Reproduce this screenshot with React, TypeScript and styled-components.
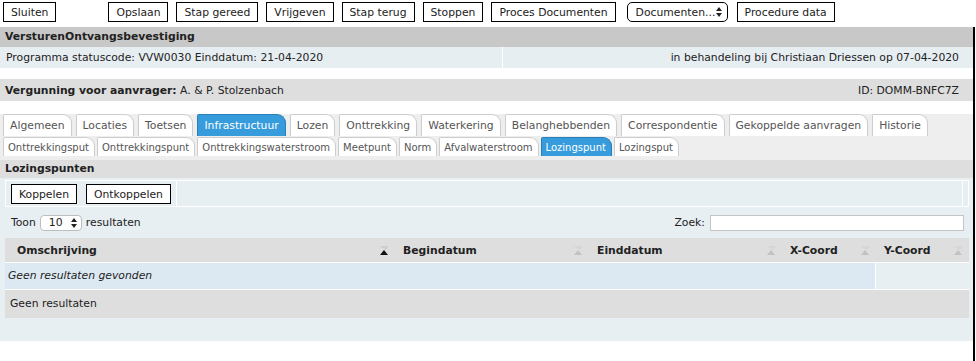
import React from "react";
import styled, { createGlobalStyle } from "styled-components";

const GlobalStyle = createGlobalStyle`
  html, body {
    margin: 0;
    padding: 0;
    background: #fff;
  }
  body {
    font-family: "DejaVu Sans", Verdana, sans-serif;
    font-size: 10.8px;
    color: #222;
  }
`;

const Page = styled.div`
  width: 976px;
  height: 361px;
  display: flex;
  flex-direction: column;
  overflow: hidden;
`;

const Toolbar = styled.div`
  display: flex;
  align-items: flex-start;
  gap: 8px;
  height: 27px;
  padding: 2px 0 0 3px;
  box-sizing: border-box;
  flex-shrink: 0;
`;

const Button = styled.button<{ $spaced?: boolean }>`
  height: 20px;
  padding: 0 7px;
  border: 1px solid #000;
  border-radius: 0;
  background: #fff;
  font: inherit;
  color: #222;
  white-space: nowrap;
  margin-right: ${(p) => (p.$spaced ? "44px" : "0")};
`;

const Select = styled.div<{ $muted?: boolean }>`
  display: inline-flex;
  align-items: center;
  justify-content: space-between;
  box-sizing: border-box;
  height: ${(p) => (p.$muted ? "16px" : "20px")};
  padding: ${(p) => (p.$muted ? "0 4px 0 8px" : "0 5px 0 8px")};
  margin: ${(p) => (p.$muted ? "0 4px" : "0 1px 0 3px")};
  width: ${(p) => (p.$muted ? "42px" : "101px")};
  border: 1px solid ${(p) => (p.$muted ? "#bdbdbd" : "#000")};
  border-radius: ${(p) => (p.$muted ? "4px" : "5px")};
  background: #fff;
`;

const Main = styled.div`
  flex: 1;
  width: 973px;
  border-right: 2px solid #000;
  display: flex;
  flex-direction: column;
`;

const TitleBar = styled.div`
  height: 20px;
  line-height: 20px;
  background: #c8c8c8;
  font-weight: bold;
  padding-left: 5px;
`;

const InfoRow = styled.div`
  display: flex;
  height: 21px;
  background: #e7eef2;
  line-height: 21px;
`;

const InfoCell = styled.div<{ $right?: boolean }>`
  box-sizing: border-box;
  ${(p) =>
    p.$right
      ? `flex: 1; text-align: right; padding-right: 14px;`
      : `width: 503px; padding-left: 6px; border-right: 1px solid #fff;`}
`;

const ApplicantBar = styled.div`
  margin-top: 11px;
  height: 22px;
  background: #dedede;
  display: flex;
  align-items: center;
  justify-content: space-between;
  padding: 0 14px 0 5px;
`;

const TabsArea = styled.div`
  margin-top: 13px;
  background: #eeeeee;
  padding: 0 0 4px 3px;
  display: flex;
  flex-direction: column;
  gap: 1px;
`;

const TabRow = styled.div<{ $small?: boolean }>`
  display: flex;
  align-items: flex-end;
  gap: ${(p) => (p.$small ? "2px" : "4px")};
`;

const Tab = styled.div<{ $active?: boolean; $small?: boolean }>`
  box-sizing: border-box;
  height: ${(p) => (p.$small ? "19px" : "22px")};
  line-height: ${(p) => (p.$small ? "19px" : "22px")};
  padding: ${(p) => (p.$small ? "0 5px 0 4px" : "0 6px 0 6px")};
  font-size: ${(p) => (p.$small ? "10px" : "10.8px")};
  border: 1px solid ${(p) => (p.$active ? "#2c7fb6" : "#cdcdcd")};
  border-bottom: none;
  border-radius: 2px 9px 0 0;
  background: ${(p) => (p.$active ? "#379cdc" : "#fff")};
  color: ${(p) => (p.$active ? "#fff" : "#555")};
  white-space: nowrap;
`;

const SectionBar = styled.div`
  height: 18px;
  line-height: 18px;
  background: #dedede;
  font-weight: bold;
  padding-left: 5px;
`;

const Panel = styled.div`
  height: 163px;
  background: #e8eff2;
  padding: 2px 4px 0 5px;
  box-sizing: border-box;
  display: flex;
  flex-direction: column;
`;

const ActionBar = styled.div`
  display: flex;
  height: 27px;
  border: 1px solid #fff;
  box-sizing: border-box;
`;

const ActionCell = styled.div<{ $kind: "buttons" | "fill" | "end" }>`
  display: flex;
  gap: 9px;
  ${(p) =>
    p.$kind === "buttons"
      ? `width: 171px; padding: 3px 0 0 5px; border-right: 1px solid #fff; box-sizing: border-box;`
      : p.$kind === "fill"
      ? `flex: 1;`
      : `width: 5px; border-left: 1px solid #fff;`}
`;

const LengthRow = styled.div`
  height: 31px;
  display: flex;
  align-items: center;
  justify-content: space-between;
  padding: 0 5px 0 6px;
`;

const Inline = styled.div`
  display: flex;
  align-items: center;
`;

const SearchInput = styled.input`
  width: 254px;
  height: 16px;
  box-sizing: border-box;
  border: 1px solid #c4c4c4;
  margin: 0 0 0 5px;
  padding: 0 3px;
  font: inherit;
  background: #fff;
`;

const Table = styled.div`
  display: grid;
  grid-template-columns: 390px 194px 193px 94px 1fr;
`;

const HeadCell = styled.div<{ $first?: boolean }>`
  height: 24px;
  background: #dedede;
  border-bottom: 1px solid #fff;
  display: flex;
  align-items: center;
  justify-content: space-between;
  padding: 0 5px 0 ${(p) => (p.$first ? "12px" : "8px")};
  font-weight: bold;
`;

const EmptyRow = styled.div`
  grid-column: 1 / 5;
  height: 26px;
  line-height: 26px;
  background: #dde9f2;
  border-right: 1px solid #fff;
  padding-left: 3px;
  font-style: italic;
`;

const Footer = styled.div`
  grid-column: 1 / -1;
  height: 28px;
  line-height: 28px;
  background: #dedede;
  border-top: 1px solid #fff;
  padding-left: 5px;
`;

const SortIcon = ({ active }: { active?: boolean }) => (
  <svg width="12" height="9" viewBox="0 0 12 9">
    <polygon points="1,0 11,0 8,4" fill={active ? "#cfcfcf" : "#d6d6d6"} />
    <polygon points="2,9 10,9 6,4" fill={active ? "#111" : "#c2c2c2"} />
  </svg>
);

const UpDown = () => (
  <svg width="6" height="10" viewBox="0 0 6 10">
    <polygon points="0,4 6,4 3,0" fill="#222" />
    <polygon points="0,6 6,6 3,10" fill="#222" />
  </svg>
);

const topButtons = [
  "Opslaan",
  "Stap gereed",
  "Vrijgeven",
  "Stap terug",
  "Stoppen",
  "Proces Documenten",
];

const mainTabs = [
  "Algemeen",
  "Locaties",
  "Toetsen",
  "Infrastructuur",
  "Lozen",
  "Onttrekking",
  "Waterkering",
  "Belanghebbenden",
  "Correspondentie",
  "Gekoppelde aanvragen",
  "Historie",
];

const subTabs = [
  "Onttrekkingsput",
  "Onttrekkingspunt",
  "Onttrekkingswaterstroom",
  "Meetpunt",
  "Norm",
  "Afvalwaterstroom",
  "Lozingspunt",
  "Lozingsput",
];

const columns = ["Omschrijving", "Begindatum", "Einddatum", "X-Coord", "Y-Coord"];

export default function App() {
  return (
    <Page>
      <GlobalStyle />
      <Toolbar>
        <Button $spaced>Sluiten</Button>
        {topButtons.map((b) => (
          <Button key={b}>{b}</Button>
        ))}
        <Select>
          <span>Documenten...</span>
          <UpDown />
        </Select>
        <Button>Procedure data</Button>
      </Toolbar>

      <Main>
        <TitleBar>VersturenOntvangsbevestiging</TitleBar>
        <InfoRow>
          <InfoCell>Programma statuscode: VVW0030 Einddatum: 21-04-2020</InfoCell>
          <InfoCell $right>in behandeling bij Christiaan Driessen op 07-04-2020</InfoCell>
        </InfoRow>

        <ApplicantBar>
          <span>
            <b>Vergunning voor aanvrager:</b> A. &amp; P. Stolzenbach
          </span>
          <span>ID: DOMM-BNFC7Z</span>
        </ApplicantBar>

        <TabsArea>
          <TabRow>
            {mainTabs.map((t) => (
              <Tab key={t} $active={t === "Infrastructuur"}>
                {t}
              </Tab>
            ))}
          </TabRow>
          <TabRow $small>
            {subTabs.map((t) => (
              <Tab key={t} $small $active={t === "Lozingspunt"}>
                {t}
              </Tab>
            ))}
          </TabRow>
        </TabsArea>

        <SectionBar>Lozingspunten</SectionBar>
        <Panel>
          <ActionBar>
            <ActionCell $kind="buttons">
              <Button>Koppelen</Button>
              <Button>Ontkoppelen</Button>
            </ActionCell>
            <ActionCell $kind="fill" />
            <ActionCell $kind="end" />
          </ActionBar>

          <LengthRow>
            <Inline>
              Toon
              <Select $muted>
                <span>10</span>
                <UpDown />
              </Select>
              resultaten
            </Inline>
            <Inline>
              Zoek:
              <SearchInput />
            </Inline>
          </LengthRow>

          <Table>
            {columns.map((c, i) => (
              <HeadCell key={c} $first={i === 0}>
                <span>{c}</span>
                <SortIcon active={i === 0} />
              </HeadCell>
            ))}
            <EmptyRow>Geen resultaten gevonden</EmptyRow>
            <Footer>Geen resultaten</Footer>
          </Table>
        </Panel>
      </Main>
    </Page>
  );
}
